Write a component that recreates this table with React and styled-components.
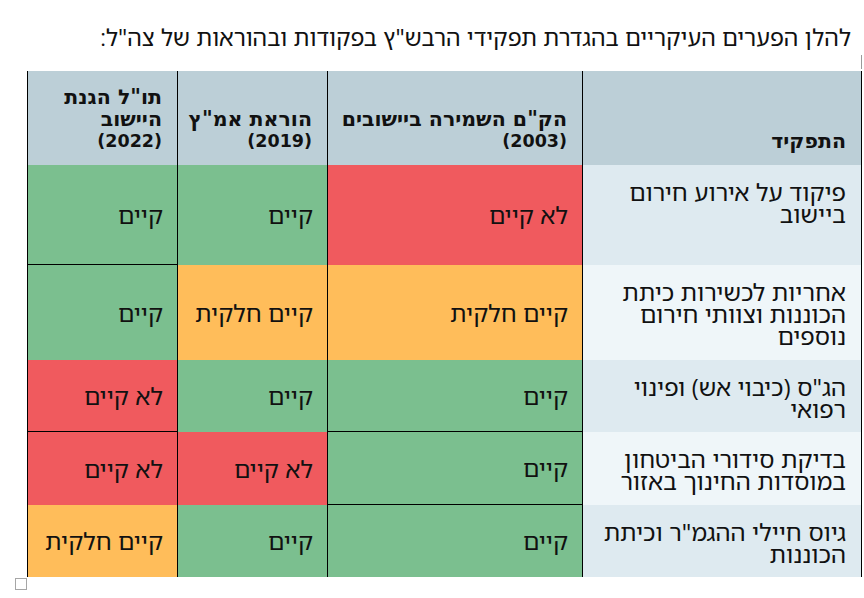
import React from "react";
import styled, { createGlobalStyle } from "styled-components";

const GlobalStyle = createGlobalStyle`
  html, body { margin: 0; padding: 0; background: #ffffff; }
  body { font-family: "Noto Sans Hebrew", "Noto Sans", "DejaVu Sans", sans-serif; color: #111; }
`;

const COLORS = {
  yes: "#7bbf8f",
  no: "#f05a5e",
  part: "#ffbd5a",
};

const LABELS = {
  yes: "קיים",
  no: "לא קיים",
  part: "קיים חלקית",
};

const Page = styled.div`
  direction: rtl;
  width: 864px;
`;

const Title = styled.p`
  margin: 0;
  padding: 25px 13px 0 0;
  font-size: 23.2px;
  line-height: 24px;
  text-align: right;
  white-space: nowrap;
`;

const TableWrap = styled.div`
  position: relative;
  margin: 22px 2px 0 0;
  width: 835px;
  &::before {
    content: "";
    position: absolute;
    top: -16px;
    right: 0;
    width: 1px;
    height: 14px;
    background: #9a9a9a;
  }
`;

const Grid = styled.div`
  display: grid;
  grid-template-columns: 279px 255px 150px 150px;
  grid-template-rows: 94px 100px 95px 72px 73px 72px;
  border-right: 1px solid #000;
`;

const HeadCell = styled.div`
  box-sizing: border-box;
  background: #bccfd7;
  border-left: 1px solid #000;
  display: flex;
  flex-direction: column;
  justify-content: flex-end;
  padding: 0 15px 13px 4px;
  font-family: "DejaVu Sans", "Noto Sans Hebrew", sans-serif;
  font-weight: bold;
  line-height: 22px;
  text-align: right;
`;

const HeadLine = styled.span`
  display: block;
  white-space: nowrap;
  font-size: ${(p) => (p.$year ? "17.5px" : "20.5px")};
`;

const RoleCell = styled.div`
  box-sizing: border-box;
  background: ${(p) => (p.$alt ? "#eff6f9" : "#deeaf0")};
  border-left: 1px solid #000;
  padding: 16px 15px 0 4px;
  font-size: 24px;
  line-height: 22px;
  text-align: right;
`;

const ValueCell = styled.div`
  box-sizing: border-box;
  background: ${(p) => COLORS[p.$status]};
  border-left: 1px solid #000;
  border-bottom: ${(p) => (p.$line ? "1px solid #000" : "0")};
  display: flex;
  align-items: center;
  padding: 0 14px 0 4px;
  font-size: 24px;
  line-height: 24px;
  white-space: nowrap;
`;

const Line = styled.span`
  display: block;
  white-space: nowrap;
`;

const EndMark = styled.div`
  box-sizing: border-box;
  width: 12px;
  height: 12px;
  border: 1px solid #a6a6a6;
  margin: 1px 0 0 15px;
  margin-right: auto;
`;

const headers = [
  ["התפקיד"],
  ['הק"ם השמירה ביישובים', "(2003)"],
  ['הוראת אמ"ץ', "(2019)"],
  ['תו"ל הגנת', "היישוב", "(2022)"],
];

const rows = [
  { role: ["פיקוד על אירוע חירום", "ביישוב"], vals: ["no", "yes", "yes"] },
  {
    role: ["אחריות לכשירות כיתת", "הכוננות וצוותי חירום", "נוספים"],
    vals: ["part", "part", "yes"],
  },
  { role: ['הג"ס (כיבוי אש) ופינוי', "רפואי"], vals: ["yes", "yes", "no"] },
  {
    role: ["בדיקת סידורי הביטחון", "במוסדות החינוך באזור"],
    vals: ["yes", "no", "no"],
  },
  {
    role: ['גיוס חיילי ההגמ"ר וכיתת', "הכוננות"],
    vals: ["yes", "yes", "part"],
  },
];

export default function App() {
  return (
    <Page>
      <GlobalStyle />
      <Title>להלן הפערים העיקריים בהגדרת תפקידי הרבש"ץ בפקודות ובהוראות של צה"ל:</Title>
      <TableWrap>
        <Grid>
          {headers.map((h, i) => (
            <HeadCell key={"h" + i}>
              {h.map((l, j) => (
                <HeadLine key={j} $year={l.startsWith("(")}>
                  {l}
                </HeadLine>
              ))}
            </HeadCell>
          ))}
          {rows.map((r, ri) => (
            <React.Fragment key={ri}>
              <RoleCell $alt={ri % 2 === 1}>
                {r.role.map((l, j) => (
                  <Line key={j}>{l}</Line>
                ))}
              </RoleCell>
              {r.vals.map((v, ci) => {
                const next = rows[ri + 1];
                const line = next && next.vals[ci] === v;
                return (
                  <ValueCell key={ci} $status={v} $line={line}>
                    {LABELS[v]}
                  </ValueCell>
                );
              })}
            </React.Fragment>
          ))}
        </Grid>
      </TableWrap>
      <EndMark />
    </Page>
  );
}
